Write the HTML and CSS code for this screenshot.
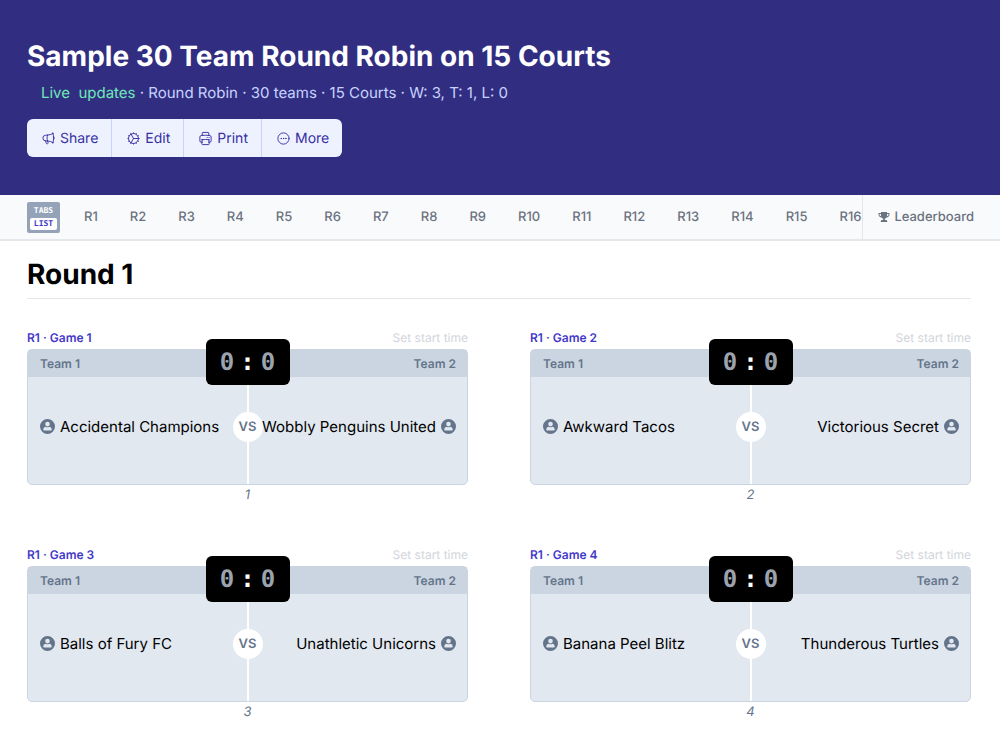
FILE: index.html
```html
<!DOCTYPE html>
<html lang="en">

<head>
    <meta charset="UTF-8">
    <meta name="viewport" content="width=device-width, initial-scale=1.0">
    <title>Sample 30 Team Round Robin on 15 Courts</title>
    <link rel="stylesheet" href="styles.css">
</head>

<body>
    <!-- shared icon for every team -->
    <svg class="sprite" aria-hidden="true">
        <symbol id="user" viewBox="0 0 20 20">
            <path fill-rule="evenodd" d="M10 0a10 10 0 1 0 0 20 10 10 0 0 0 0-20zm0 3.700a3.100 3.100 0 1 1 0 6.200 3.100 3.100 0 0 1 0-6.200zM4.400 14.300c0-2.300 1.500-3.900 3.400-3.900.6.5 1.400.7 2.200.7s1.600-.2 2.200-.7c1.900 0 3.400 1.600 3.400 3.900 0 .7-.4 1.100-1.100 1.100h-9c-.7 0-1.100-.4-1.100-1.100z" />
        </symbol>
    </svg>

    <header class="header">
        <h1>Sample 30 Team Round Robin on 15 Courts</h1>
        <p class="info"><span class="live">Live&nbsp; updates</span> · Round Robin · 30 teams · 15 Courts · W: 3, T: 1, L: 0</p>
        <div class="actions">
            <button type="button">
                <svg viewBox="0 0 24 24"><path d="M10.340 15.840c-.688-.060-1.386-.090-2.090-.090H7.500a4.500 4.500 0 1 1 0-9h.750c.704 0 1.402-.030 2.090-.090m0 9.180c.253.962.584 1.892.985 2.783.247.550.060 1.210-.463 1.511l-.657.380c-.551.318-1.260.117-1.527-.461a20.845 20.845 0 0 1-1.440-4.282m3.102.069a18.030 18.030 0 0 1-.590-4.590c0-1.586.205-3.124.590-4.590m0 9.180a23.848 23.848 0 0 1 8.835 2.535M10.340 6.660a23.847 23.847 0 0 0 8.835-2.535m0 0A23.740 23.740 0 0 0 18.795 3m.380 1.125a23.910 23.910 0 0 1 1.014 5.395m-1.014 8.855c-.118.380-.245.754-.380 1.125m.380-1.125a23.910 23.910 0 0 0 1.014-5.395m0-3.460c.495.413.811 1.035.811 1.730 0 .695-.316 1.317-.811 1.730m0-3.460a24.347 24.347 0 0 1 0 3.460" /></svg>
                Share
            </button>
            <button type="button">
                <svg viewBox="0 0 24 24"><circle cx="12" cy="12" r="8" /><path d="M12 12h8M12 12 8 5M12 12l-4 7M12 4V3M12 21v-1M4 12H3M21 12h-1M16 5l.500-.800M16 19l.500.800M8 5l-.500-.800M8 19l-.500.800M5 8l-.800-.500M19 8l.800-.500M5 16l-.800.500M19 16l.800.500" /></svg>
                Edit
            </button>
            <button type="button">
                <svg viewBox="0 0 24 24"><path d="M6.720 13.829c-.240.030-.480.062-.720.096m.720-.096a42.415 42.415 0 0 1 10.560 0m-10.560 0L6.340 18m10.940-4.171c.240.030.480.062.720.096m-.720-.096L17.660 18m0 0 .229 2.523a1.125 1.125 0 0 1-1.120 1.227H7.231c-.662 0-1.180-.568-1.120-1.227L6.340 18m11.318 0h1.091A2.250 2.250 0 0 0 21 15.750V9.456c0-1.081-.768-2.015-1.837-2.175a48.055 48.055 0 0 0-1.913-.247M6.340 18H5.250A2.250 2.250 0 0 1 3 15.750V9.456c0-1.081.768-2.015 1.837-2.175a48.041 48.041 0 0 1 1.913-.247m10.500 0a48.536 48.536 0 0 0-10.500 0m10.500 0V3.375c0-.621-.504-1.125-1.125-1.125h-8.250c-.621 0-1.125.504-1.125 1.125v3.659M18 10.500h.008v.008H18V10.500Zm-3 0h.008v.008H15V10.500Z" /></svg>
                Print
            </button>
            <button type="button">
                <svg viewBox="0 0 24 24"><path d="M8.625 12a.375.375 0 1 1-.750 0 .375.375 0 0 1 .750 0Zm3.750 0a.375.375 0 1 1-.750 0 .375.375 0 0 1 .750 0Zm3.750 0a.375.375 0 1 1-.750 0 .375.375 0 0 1 .750 0ZM21 12a9 9 0 1 1-18 0 9 9 0 0 1 18 0Z" /></svg>
                More
            </button>
        </div>
    </header>

    <nav class="nav">
        <button type="button" class="toggle"><span>TABS</span><span class="on">LIST</span></button>
        <div class="rounds">
            <a href="#r1">R1</a>
            <a href="#r2">R2</a>
            <a href="#r3">R3</a>
            <a href="#r4">R4</a>
            <a href="#r5">R5</a>
            <a href="#r6">R6</a>
            <a href="#r7">R7</a>
            <a href="#r8">R8</a>
            <a href="#r9">R9</a>
            <a href="#r10">R10</a>
            <a href="#r11">R11</a>
            <a href="#r12">R12</a>
            <a href="#r13">R13</a>
            <a href="#r14">R14</a>
            <a href="#r15">R15</a>
            <a href="#r16">R16</a>
        </div>
        <a class="leaderboard" href="#leaderboard">
            <svg viewBox="0 0 24 24"><path d="M6 2h12v2h5v3c0 3-2.500 5.500-6 6-.9 1.300-2 2.200-3.300 2.600V18H16c1.500 0 2.500 1.200 2.500 3v1h-13v-1c0-1.800 1-3 2.500-3h2.300v-2.400C9 15.200 7.900 14.300 7 13c-3.500-.5-6-3-6-6V4h5zM3 6v1c0 1.700 1.200 3.100 3 3.700C5.500 9.200 5.900 7.600 5.900 6zm18 0h-2.900c0 1.600.4 3.200-.1 4.700 1.800-.6 3-2 3-3.700z" /></svg>
            Leaderboard
        </a>
    </nav>

    <main class="main">
        <h2 id="r1">Round 1</h2>
        <div class="games">
            <section class="game">
                <div class="game-top">
                    <a href="#game1">R1 · Game 1</a>
                    <button type="button">Set start time</button>
                </div>
                <div class="card">
                    <div class="card-head"><span>Team 1</span><span>Team 2</span></div>
                    <div class="card-body">
                        <div class="team"><svg><use href="#user" /></svg>Accidental Champions</div>
                        <div class="team away">Wobbly Penguins United<svg><use href="#user" /></svg></div>
                    </div>
                    <button type="button" class="score"><span>0</span><b>:</b><span>0</span></button>
                    <div class="vs">VS</div>
                </div>
                <div class="court">1</div>
            </section>

            <section class="game">
                <div class="game-top">
                    <a href="#game2">R1 · Game 2</a>
                    <button type="button">Set start time</button>
                </div>
                <div class="card">
                    <div class="card-head"><span>Team 1</span><span>Team 2</span></div>
                    <div class="card-body">
                        <div class="team"><svg><use href="#user" /></svg>Awkward Tacos</div>
                        <div class="team away">Victorious Secret<svg><use href="#user" /></svg></div>
                    </div>
                    <button type="button" class="score"><span>0</span><b>:</b><span>0</span></button>
                    <div class="vs">VS</div>
                </div>
                <div class="court">2</div>
            </section>

            <section class="game">
                <div class="game-top">
                    <a href="#game3">R1 · Game 3</a>
                    <button type="button">Set start time</button>
                </div>
                <div class="card">
                    <div class="card-head"><span>Team 1</span><span>Team 2</span></div>
                    <div class="card-body">
                        <div class="team"><svg><use href="#user" /></svg>Balls of Fury FC</div>
                        <div class="team away">Unathletic Unicorns<svg><use href="#user" /></svg></div>
                    </div>
                    <button type="button" class="score"><span>0</span><b>:</b><span>0</span></button>
                    <div class="vs">VS</div>
                </div>
                <div class="court">3</div>
            </section>

            <section class="game">
                <div class="game-top">
                    <a href="#game4">R1 · Game 4</a>
                    <button type="button">Set start time</button>
                </div>
                <div class="card">
                    <div class="card-head"><span>Team 1</span><span>Team 2</span></div>
                    <div class="card-body">
                        <div class="team"><svg><use href="#user" /></svg>Banana Peel Blitz</div>
                        <div class="team away">Thunderous Turtles<svg><use href="#user" /></svg></div>
                    </div>
                    <button type="button" class="score"><span>0</span><b>:</b><span>0</span></button>
                    <div class="vs">VS</div>
                </div>
                <div class="court">4</div>
            </section>
        </div>
    </main>
</body>

</html>
```

FILE: styles.css
```css
* {
    box-sizing: border-box;
}

body {
    margin: 0;
    background-color: #fff;
    color: #000;
    font-family: Inter, "Liberation Sans", sans-serif;
    font-size: 15px;
    text-rendering: geometricPrecision;
}

h1,
h2,
p {
    margin: 0;
}

a {
    text-decoration: none;
    color: inherit;
}

button {
    border: 0;
    padding: 0;
    background: none;
    font-family: inherit;
    text-rendering: inherit;
    cursor: pointer;
}

.sprite {
    display: none;
}

/* header */
.header {
    background-color: #312e81;
    padding: 38px 27px;
}

.header h1 {
    color: #fff;
    font-size: 28px;
    line-height: 36px;
    font-weight: 700;
}

.info {
    margin-top: 9px;
    padding-left: 14px;
    line-height: 20px;
    color: #c7d2fe;
}

.live {
    color: #6ee7b7;
}

.actions {
    display: inline-flex;
    vertical-align: top;
    margin-top: 16px;
    border-radius: 6px;
    overflow: hidden;
    background-color: #eef2ff;
}

.actions button {
    display: flex;
    align-items: center;
    gap: 4px;
    height: 38px;
    padding: 0 13px 0 14px;
    color: #3730a3;
    font-size: 14px;
}

.actions button + button {
    border-left: 1px solid #c7d2fe;
}

.actions svg {
    width: 15px;
    height: 15px;
    fill: none;
    stroke: currentColor;
    stroke-width: 1.5;
    stroke-linecap: round;
    stroke-linejoin: round;
}

/* rounds bar */
.nav {
    display: flex;
    align-items: center;
    height: 46px;
    padding-left: 27px;
    border-bottom: 2px solid #e5e7eb;
    background-color: #f9fafb;
    color: #6b7280;
    font-size: 13px;
    font-weight: 500;
}

.toggle {
    display: flex;
    flex-direction: column;
    flex-shrink: 0;
    gap: 1px;
    width: 33px;
    padding: 3px;
    border-radius: 2px;
    background-color: #94a3b8;
    color: #fff;
    font-family: "DejaVu Sans Mono", monospace;
    font-size: 8px;
    font-weight: 700;
    line-height: 12px;
}

.toggle span {
    border-radius: 2px;
}

.toggle .on {
    background-color: #fff;
    color: #4338ca;
}

.rounds {
    display: flex;
    flex: 1;
    gap: 32px;
    min-width: 0;
    padding-left: 24px;
    overflow: hidden;
}

.leaderboard {
    display: flex;
    align-items: center;
    align-self: stretch;
    gap: 4px;
    padding: 0 26px 0 15px;
    border-left: 1px solid #e5e7eb;
}

.leaderboard svg {
    width: 12px;
    height: 12px;
    fill: currentColor;
}

/* games */
.main {
    padding: 15px 29px 20px 27px;
}

.main h2 {
    padding-bottom: 5px;
    border-bottom: 1px solid #e5e7eb;
    font-size: 28px;
    line-height: 37px;
    font-weight: 700;
}

.games {
    display: grid;
    grid-template-columns: 1fr 1fr;
    gap: 37px 62px;
    margin-top: 27px;
}

.game-top {
    display: flex;
    justify-content: space-between;
    align-items: center;
    height: 23px;
    color: #4338ca;
    font-size: 12px;
    font-weight: 600;
}

.game-top button {
    color: #d1d5db;
    font-size: 12px;
}

.card {
    position: relative;
    border: 1px solid #cbd5e1;
    border-radius: 5px;
    background-color: #e2e8f0;
}

.card-head {
    display: flex;
    justify-content: space-between;
    padding: 0 11px 0 12px;
    background-color: #cbd5e1;
    color: #64748b;
    font-size: 12px;
    line-height: 27px;
    font-weight: 600;
}

.card-body {
    display: grid;
    grid-template-columns: 1fr 1fr;
    height: 107px;
}

.team {
    display: flex;
    align-items: center;
    gap: 5px;
    min-width: 0;
    padding-bottom: 8px;
    padding-left: 12px;
    border-right: 1px solid #fff;
    white-space: nowrap;
}

.team.away {
    justify-content: flex-end;
    padding-right: 11px;
    padding-left: 0;
    border-right: 0;
    border-left: 1px solid #fff;
}

.team svg {
    flex-shrink: 0;
    width: 15px;
    height: 15px;
    fill: #64748b;
}

/* scoreboard sits over the card's top edge */
.score {
    position: absolute;
    top: -11px;
    left: 50%;
    display: flex;
    justify-content: center;
    align-items: center;
    gap: 6px;
    width: 84px;
    height: 46px;
    border-radius: 6px;
    background-color: #000;
    color: #9ca3af;
    font-family: "DejaVu Sans Mono", monospace;
    font-size: 24px;
    font-weight: 700;
    transform: translateX(-50%);
}

.score b {
    color: #fff;
}

.vs {
    position: absolute;
    top: 62px;
    left: 50%;
    width: 30px;
    border-radius: 50%;
    background-color: #fff;
    color: #64748b;
    font-size: 13px;
    line-height: 30px;
    font-weight: 600;
    text-align: center;
    transform: translateX(-50%);
}

.court {
    color: #64748b;
    font-size: 13px;
    line-height: 21px;
    font-style: italic;
    text-align: center;
}

@media screen and (max-width: 700px) {
    .games {
        grid-template-columns: 1fr;
    }
}
```
